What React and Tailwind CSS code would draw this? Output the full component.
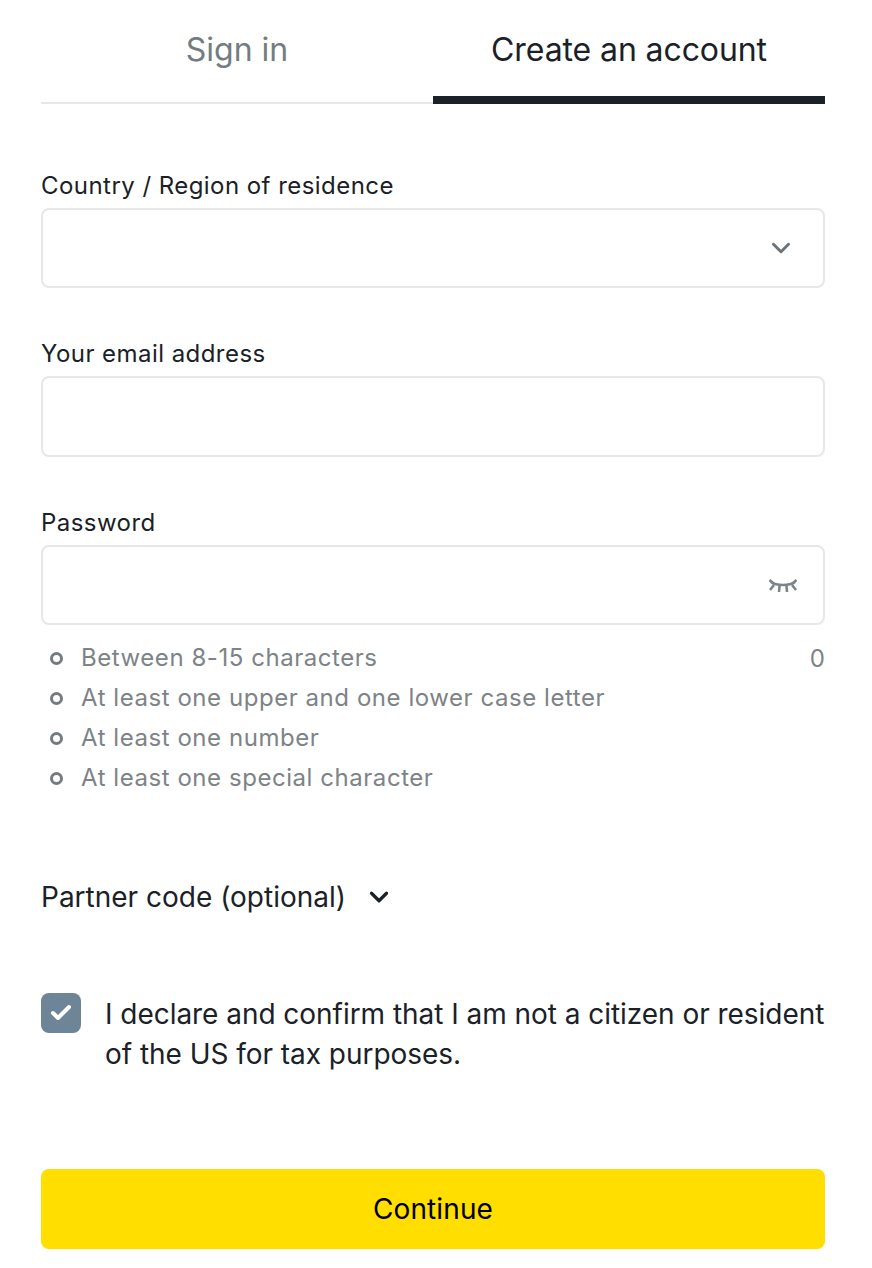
import React from "react";
import { Check, ChevronDown } from "lucide-react";

const hints = [
  "Between 8-15 characters",
  "At least one upper and one lower case letter",
  "At least one number",
  "At least one special character",
];

const Field = ({ label, className = "", boxClass = "h-20", children }) => (
  <div className={className}>
    <label className="block h-8 text-[24px] leading-[33px] tracking-[0.45px] text-[#1a2128]">{label}</label>
    <div className={`mt-[7px] rounded-lg border-2 border-[#e7e7e7] bg-white flex items-center justify-end ${boxClass}`}>
      {children}
    </div>
  </div>
);

const EyeClosed = () => (
  <svg width="30" height="16" viewBox="0 0 30 16" fill="none" stroke="#7d8489" strokeWidth="2.6" className="mr-[25px] mt-[3px]">
    <path d="M3 3 C 9 7, 21 7, 27 3" />
    <path d="M1.5 1 L6 5" />
    <path d="M28.5 1 L24 5" />
    <path d="M2 11 L6 6" />
    <path d="M28 11 L24 6" />
    <path d="M11 13 L11.5 7" />
    <path d="M19 13 L18.5 7" />
  </svg>
);

const App = () => {
  return (
    <div className="w-[872px] h-[1268px] bg-white pl-[41px] pr-[47px] font-['Inter','Liberation_Sans',sans-serif] overflow-hidden">
      <div className="flex h-[104px] w-[784px]">
        <div className="flex-1 border-b-2 border-[#e7e7e7] text-center text-[32px] leading-[100px] text-[#747c82]">Sign in</div>
        <div className="flex-1 border-b-8 border-[#1a2128] text-center text-[32px] leading-[100px] tracking-[-0.1px] text-[#1a2128]">Create an account</div>
      </div>

      <Field label="Country / Region of residence" className="mt-[65px]">
        <ChevronDown size={30} strokeWidth={2.4} className="mr-[27px] text-[#6d7479]" />
      </Field>
      <Field label="Your email address" className="mt-[49px]" boxClass="h-[81px]" />
      <Field label="Password" className="mt-[49px]">
        <EyeClosed />
      </Field>

      <div className="relative mt-[13px]">
        <ul>
          {hints.map((hint) => (
            <li key={hint} className="flex items-center h-10 text-[24px] leading-[42px] tracking-[0.55px] text-[#7d8387]">
              <span className="ml-[9px] mr-[18px] w-[13px] h-[13px] rounded-full border-[3px] border-[#747c82]" />
              {hint}
            </li>
          ))}
        </ul>
        <span className="absolute right-0 top-0 h-10 leading-[42px] text-[24px] text-[#7d8387]">0</span>
      </div>

      <div className="mt-[79px] flex items-center h-10 text-[28px] leading-[42px] text-[#1a2128]">
        <span>Partner code (optional)</span>
        <ChevronDown size={30} strokeWidth={2.6} className="ml-[18px]" />
      </div>

      <div className="mt-[75px] flex">
        <div className="w-10 h-10 mt-[1px] shrink-0 rounded-lg bg-[#6d8596] flex items-center justify-center">
          <Check size={24} strokeWidth={4} className="text-white" />
        </div>
        <p className="ml-6 mt-[2px] text-[28px] leading-10 tracking-[-0.04px] text-[#1a2128]">
          I declare and confirm that I am not a citizen or resident of the US for tax purposes.
        </p>
      </div>

      <button className="mt-[95px] w-full h-20 rounded-lg bg-[#ffde00] text-[28px] leading-[42px] tracking-[0.1px] text-[#000]">Continue</button>
    </div>
  );
};

export default App;
